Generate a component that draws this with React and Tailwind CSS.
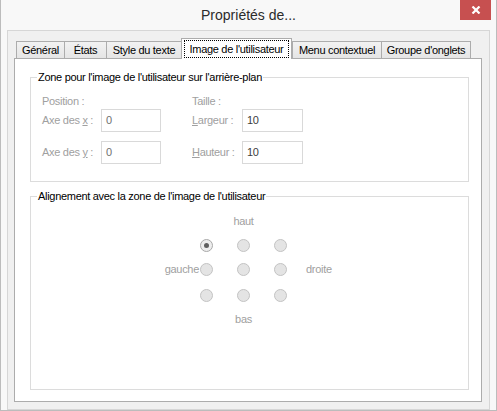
import React from "react";

const tabs = [
  { label: "Général", w: "w-[48px]" },
  { label: "États", w: "w-[42px]" },
  { label: "Style du texte", w: "w-[75px]", beforeActive: true },
  { label: "Image de l'utilisateur", w: "w-[111px]", active: true },
  { label: "Menu contextuel", w: "w-[89px]" },
  { label: "Groupe d'onglets", w: "w-[90px]", last: true },
];

function Tab({ tab }) {
  if (tab.active) {
    return (
      <div
        className={`${tab.w} relative z-10 mb-[-1px] flex h-[21px] items-start justify-center border border-b-0 border-[#acacac] bg-white px-[2px] pt-[1px]`}
      >
        <span className="flex h-[18px] w-full items-center justify-center border border-dotted border-black text-black">
          {tab.label}
        </span>
      </div>
    );
  }
  return (
    <div
      className={`${tab.w} flex h-[17px] items-center justify-center border-t border-l border-[#acacac] bg-gradient-to-b from-[#f2f2f2] to-[#e5e5e5] text-black ${
        tab.last ? "border-r" : ""
      }`}
    >
      {tab.label}
    </div>
  );
}

function Field({ value, dim }) {
  return (
    <div
      className={`flex h-[23px] items-center border border-[#d9d9d9] bg-white pl-[4px] ${
        dim ? "text-[#707070]" : "text-[#3c3c3c]"
      }`}
    >
      {value}
    </div>
  );
}

function Radio({ checked }) {
  return (
    <span
      className={`ml-[1px] flex h-[13px] w-[13px] shrink-0 items-center justify-center rounded-full border ${
        checked ? "border-[#a9a9a9] bg-[#ededed]" : "border-[#c3c3c3] bg-[#e4e4e4]"
      }`}
    >
      {checked && <span className="h-[5px] w-[5px] rounded-full bg-[#5f5f5f]" />}
    </span>
  );
}

function RadioRow({ left, right, selected, className = "" }) {
  return (
    <div className={`flex h-[24px] items-center pl-[128px] ${className}`}>
      <span className="w-[40px] text-right">{left}</span>
      <Radio checked={selected === 0} />
      <span className="ml-[23px] flex">
        <Radio checked={selected === 1} />
      </span>
      <span className="ml-[23px] flex">
        <Radio checked={selected === 2} />
      </span>
      <span className="ml-[19px]">{right}</span>
    </div>
  );
}

function CenterLabel({ text }) {
  return (
    <div className="flex h-[24px] items-center pl-[128px]">
      <span className="w-[40px]" />
      <span className="ml-[1px] w-[13px]" />
      <span className="ml-[24px] flex w-[13px] justify-center">{text}</span>
    </div>
  );
}

export default function App() {
  return (
    <div className="relative h-[411px] w-[497px] border-x border-b border-[#bcbcbc] bg-[#f8f8f8] font-['Liberation_Sans',Arial,sans-serif] text-[11px] leading-[13px] tracking-[-0.3px] text-black">
      {/* title bar */}
      <div className="flex h-[30px] items-center justify-center text-[14px] tracking-normal text-[#2b2b2b]">
        Propriétés de...
      </div>
      <button className="absolute top-0 right-[5px] flex h-[20px] w-[31px] items-center justify-center bg-[#c75050]">
        <svg width="10" height="8" viewBox="0 0 10 8">
          <path d="M1.5 0.5 L8.5 7.5 M8.5 0.5 L1.5 7.5" stroke="white" strokeWidth="2.2" />
        </svg>
      </button>

      {/* client area */}
      <div className="mx-[6px] h-[380px] w-[483px] border border-[#d6d6d6] bg-[#f0f0f0] pt-[7px]">
        <div className="flex items-end pl-[8px]">
          {tabs.map((t) => (
            <Tab key={t.label} tab={t} />
          ))}
        </div>

        <div className="ml-[6px] h-[344px] w-[468px] border border-[#acacac] bg-white pt-[12px]">
          <fieldset className="ml-[15px] w-[439px] border border-[#dcdcdc] pb-[17px]">
            <legend className="ml-[6px] px-[1px]">Zone pour l'image de l'utilisateur sur l'arrière-plan</legend>
            <div className="pl-[11px] text-[#a0a0a0]">
              <div className="mt-[10px] flex h-[14px] items-center">
                <span className="w-[150px]">Position :</span>
                <span>Taille :</span>
              </div>
              <div className="mt-[1px] flex items-center">
                <span className="w-[59px]">
                  Axe des <span className="underline">x</span> :
                </span>
                <div className="w-[60px]">
                  <Field value="0" dim />
                </div>
                <span className="ml-[31px] w-[50px]">
                  <span className="underline">L</span>argeur :
                </span>
                <div className="w-[61px]">
                  <Field value="10" />
                </div>
              </div>
              <div className="mt-[9px] flex items-center">
                <span className="w-[59px]">
                  Axe des <span className="underline">y</span> :
                </span>
                <div className="w-[60px]">
                  <Field value="0" dim />
                </div>
                <span className="ml-[31px] w-[50px]">
                  <span className="underline">H</span>auteur :
                </span>
                <div className="w-[61px]">
                  <Field value="10" />
                </div>
              </div>
            </div>
          </fieldset>

          <fieldset className="mt-[8px] ml-[15px] h-[200px] w-[439px] border border-[#dcdcdc]">
            <legend className="ml-[6px] px-[1px]">Alignement avec la zone de l'image de l'utilisateur</legend>
            <div className="mt-[6px] text-[#a0a0a0]">
              <CenterLabel text="haut" />
              <RadioRow selected={0} />
              <RadioRow left="gauche" right="droite" />
              <RadioRow className="mt-[2px]" />
              <CenterLabel text="bas" />
            </div>
          </fieldset>
        </div>
      </div>
    </div>
  );
}
